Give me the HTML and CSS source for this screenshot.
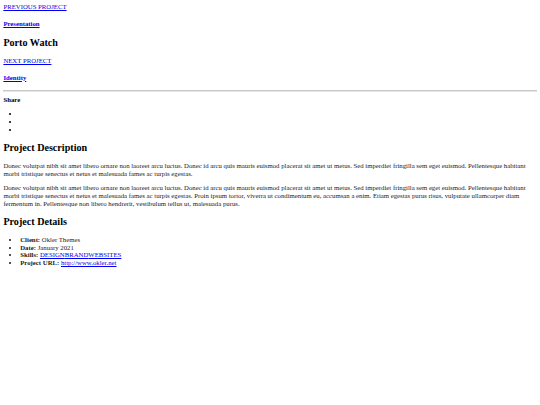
FILE: index.html
```html
<!DOCTYPE html>
<html>
<head>
<meta charset="utf-8">
<link rel="stylesheet" href="styles.css">
</head>
<body class="page">
<a href="#" class="nav-link">PREVIOUS PROJECT</a>
<h4 class="nav-title"><a href="#">Presentation</a></h4>
<h2 class="title">Porto Watch</h2>
<a href="#" class="nav-link">NEXT PROJECT</a>
<h4 class="nav-title"><a href="#">Identity</a></h4>
<hr class="rule">
<div class="share"><strong>Share</strong></div>
<ul class="list">
<li></li>
<li></li>
<li></li>
</ul>
<h2 class="title">Project Description</h2>
<p class="text">Donec volutpat nibh sit amet libero ornare non laoreet arcu luctus. Donec id arcu quis mauris euismod placerat sit amet ut metus. Sed imperdiet fringilla sem eget euismod. Pellentesque habitant morbi tristique senectus et netus et malesuada fames ac turpis egestas.</p>
<p class="text">Donec volutpat nibh sit amet libero ornare non laoreet arcu luctus. Donec id arcu quis mauris euismod placerat sit amet ut metus. Sed imperdiet fringilla sem eget euismod. Pellentesque habitant morbi tristique senectus et netus et malesuada fames ac turpis egestas. Proin ipsum tortor, viverra ut condimentum eu, accumsan a enim. Etiam egestas purus risus, vulputate ullamcorper diam fermentum in. Pellentesque non libero hendrerit, vestibulum tellus ut, malesuada purus.</p>
<h2 class="title">Project Details</h2>
<ul class="list details">
<li><strong>Client:</strong> Okler Themes</li>
<li><strong>Date:</strong> January 2021</li>
<li><strong>Skills:</strong> <a href="#">DESIGN</a><a href="#">BRAND</a><a href="#">WEBSITES</a></li>
<li><strong>Project URL:</strong> <a href="#">http://www.okler.net</a></li>
</ul>
</body>
</html>
```
FILE: styles.css
```css
html {
  font-family: "Liberation Serif", "Times New Roman", serif;
  font-size: 6.75px;
}
.page {
  margin: 3.375px;
  color: #000;
  font-size: 6.75px;
  line-height: 1.15;
}
a {
  color: #0000ee;
}
.nav-title {
  font-family: "Liberation Serif", serif;
  font-size: 1em;
  font-weight: bold;
  margin: 1.33em 0;
}
.title {
  font-family: "Liberation Serif", serif;
  font-size: 1.5em;
  font-weight: bold;
  margin: 0.83em 0;
}
.rule {
  margin: 3.375px 0;
  height: 0;
  border: 0;
  border-top: 1px solid #c8c8c8;
  border-bottom: 1px solid #e6e6e6;
}
.share {
  margin: 0;
}
.list {
  margin: 1em 0;
  padding-left: 16.875px;
}
.text {
  margin: 1em 0;
  color: #1a1a1a;
}
.details {
  color: #1a1a1a;
}
```
